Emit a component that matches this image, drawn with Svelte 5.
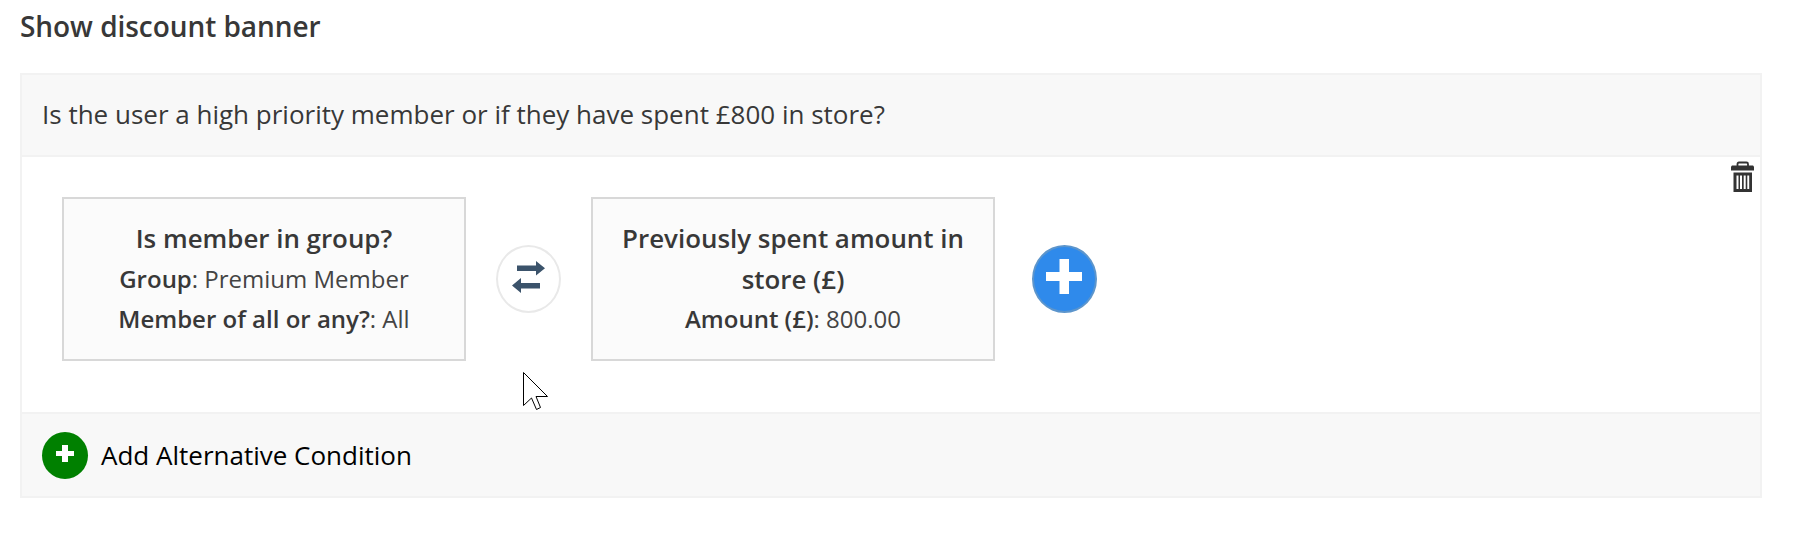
<script>
    const heading = 'Show discount banner';
    const question = 'Is the user a high priority member or if they have spent £800 in store?';

    let conditions = [
        {
            title: 'Is member in group?',
            fields: [
                { name: 'Group', value: 'Premium Member' },
                { name: 'Member of all or any?', value: 'All' }
            ]
        },
        {
            title: 'Previously spent amount in store (£)',
            fields: [{ name: 'Amount (£)', value: '800.00' }]
        }
    ];
</script>

<main>
    <h1>{heading}</h1>

    <section class="rule">
        <header>{question}</header>

        <div class="conditions">
            {#each conditions as condition, i}
                {#if i > 0}
                    <button class="round swap" aria-label="Switch operator">
                        <svg width="33" height="32" viewBox="0 0 33 32">
                            <path d="M5 4.500H24V0L33 7.250L24 14.500V10H5Z M28 22H9V17L0 24.500L9 32V27.500H28Z" fill="#3b536b" />
                        </svg>
                    </button>
                {/if}
                <article class="card">
                    <h2>{condition.title}</h2>
                    {#each condition.fields as field}
                        <p><b>{field.name}</b>: {field.value}</p>
                    {/each}
                </article>
            {/each}
            <button class="round add" aria-label="Add condition">
                <svg width="36" height="35" viewBox="0 0 36 35">
                    <path d="M13.5 0H23V13H36V22H23V35H13.5V22H0V13H13.5Z" fill="#fff" />
                </svg>
            </button>

            <button class="trash" aria-label="Delete">
                <svg width="23" height="31" viewBox="0 0 23 31">
                    <path d="M6.5 5V3Q6.5 1.500 8 1.500H15.500Q17 1.500 17 3V5" fill="none" stroke="#333" stroke-width="1.800" />
                    <path d="M1 4.500H22L23 5.500V9.500H0V5.500Z" fill="#333" />
                    <path fill-rule="evenodd" d="M2.500 11.500H21V31H2.500Z M5.500 14.500V28H7.500V14.500Z M9 14.500V28H11V14.500Z M12.700 14.500V28H14.700V14.500Z M16.300 14.500V28H18.200V14.500Z" fill="#333" />
                </svg>
            </button>
        </div>

        <footer>
            <button class="alternative" aria-label="Add alternative">
                <svg width="18" height="17" viewBox="0 0 18 17">
                    <path d="M6 0H12V6H18V11H12V17H6V11H0V6H6Z" fill="#fff" />
                </svg>
            </button>
            <span>Add Alternative Condition</span>
        </footer>
    </section>

    <!-- mouse pointer -->
    <svg class="pointer" width="26" height="40" viewBox="0 0 26 40">
        <path d="M.5 .5V33.500L8.500 26L13.500 37.500L17.500 35.500L13 24.500H24.500Z" fill="#fff" stroke="#000" />
    </svg>
</main>

<style>
    :global(body) {
        background: #fff;
    }

    main {
        position: relative;
        box-sizing: border-box;
        height: 533px;
        padding: 6px 31px 0 20px;
        font-family: 'Open Sans', sans-serif;
        color: #383838;
    }

    h1 {
        height: 67px;
        margin: 0;
        font-size: 28px;
        line-height: 40px;
        font-weight: 600;
        letter-spacing: -0.05px;
    }

    .rule {
        box-sizing: border-box;
        height: 425px;
        border: 2px solid #f2f2f2;
    }

    header {
        height: 80px;
        padding-left: 20px;
        border-bottom: 2px solid #f2f2f2;
        background: #f8f8f8;
        font-size: 26px;
        line-height: 79px;
    }

    .conditions {
        position: relative;
        display: flex;
        align-items: flex-start;
        box-sizing: border-box;
        height: 255px;
        padding: 40px 40px 0;
    }

    .card {
        box-sizing: border-box;
        width: 404px;
        height: 164px;
        padding: 19px 20px;
        border: 2px solid #d8d8d8;
        background: #fbfbfb;
        text-align: center;
    }

    h2,
    p {
        margin: 0;
        line-height: 40.5px;
    }

    h2 {
        font-size: 25.9px;
        font-weight: 600;
    }

    p {
        font-size: 24px;
        color: #444;
    }

    b {
        font-weight: 600;
        color: #383838;
    }

    button {
        display: flex;
        align-items: center;
        justify-content: center;
        box-sizing: border-box;
        flex: none;
        margin: 0;
        padding: 0;
        border: 0;
        background: none;
    }

    .round {
        width: 65px;
        height: 68px;
        border-radius: 50%;
    }

    .swap {
        margin: 48px 30px 0;
        padding-bottom: 4px;
        border: 2px solid #e9e9e9;
        background: #fff;
    }

    .add {
        margin: 48px 0 0 37px;
        padding: 0 1px 5px 0;
        border: 2px solid #5c95cc;
        background: #2f8aeb;
    }

    .trash {
        position: absolute;
        top: 4px;
        right: 6px;
    }

    footer {
        display: flex;
        align-items: center;
        gap: 13px;
        height: 82px;
        padding-left: 20px;
        border-top: 2px solid #f2f2f2;
        background: #f8f8f8;
        color: #000;
        font-size: 26px;
    }

    .alternative {
        width: 46px;
        height: 47px;
        padding-bottom: 4px;
        border-radius: 50%;
        background: #008000;
    }

    .pointer {
        position: absolute;
        left: 523px;
        top: 372px;
    }
</style>
